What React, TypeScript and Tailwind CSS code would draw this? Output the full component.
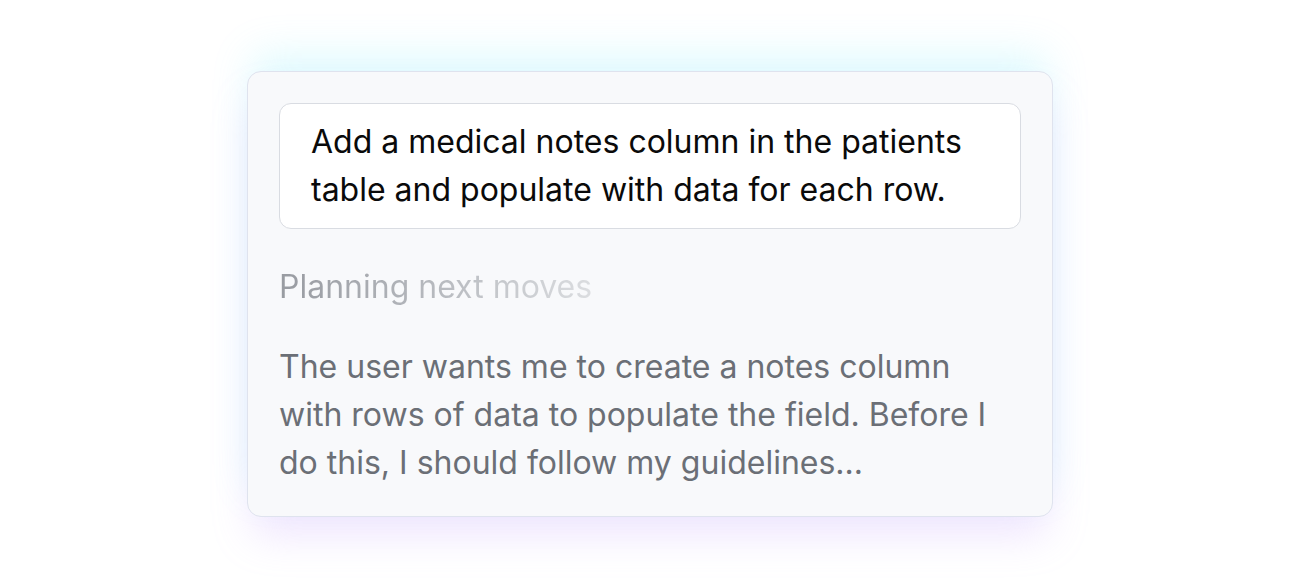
import React from "react";

export default function App() {
  return (
    <main className="flex h-[588px] w-full items-center justify-center bg-white font-['Inter',sans-serif]">
      <div className="w-[806px] rounded-[14px] border border-[#dfe3ee] bg-[#f8f9fb] px-[31px] pb-[29px] pt-[31px] shadow-[0_-22px_40px_-6px_rgba(103,232,249,0.22),0_24px_40px_-6px_rgba(196,160,250,0.28)]">
        <div className="rounded-[12px] border border-[#d9dce2] bg-white px-[31px] py-[14px] text-[32px] leading-[48px] text-[#0a0a0a]">
          Add a medical notes column in the patients table and populate with data for each row.
        </div>
        <p className="mt-[34px] w-fit bg-gradient-to-r from-[#989ba1] via-[#b7babf] to-[#dcdee1] bg-clip-text pr-1 text-[32px] leading-[48px] text-transparent">
          Planning next moves
        </p>
        <p className="mt-[32px] pr-[10px] text-[32px] leading-[48px] text-[#6b6f76]">
          The user wants me to create a notes column with rows of data to populate the field. Before I do this, I should follow my guidelines...
        </p>
      </div>
    </main>
  );
}
